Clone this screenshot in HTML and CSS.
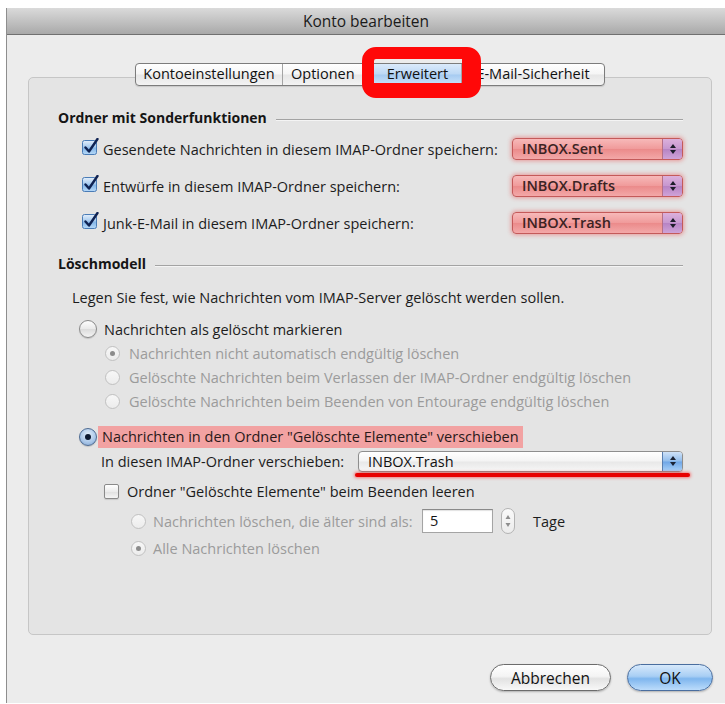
FILE: index.html
```html
<!DOCTYPE html>
<html lang="de">
<head>
<meta charset="utf-8">
<title>Konto bearbeiten</title>
<link rel="stylesheet" href="styles.css">
</head>
<body>
<svg class="defs" width="0" height="0" aria-hidden="true">
  <defs>
    <linearGradient id="check-fill" x1="0" y1="0" x2="0" y2="1">
      <stop offset="0" stop-color="#e4effb"/>
      <stop offset="0.45" stop-color="#a8cbef"/>
      <stop offset="0.55" stop-color="#86b7e8"/>
      <stop offset="1" stop-color="#b7d9f8"/>
    </linearGradient>
  </defs>
</svg>
<div class="screen">
  <div class="window">
    <div class="titlebar">Konto bearbeiten</div>
    <div class="content">
      <div class="tabs">
        <div class="tab-group">
          <div class="tab t1">Kontoeinstellungen</div>
          <div class="tab t2">Optionen</div>
          <div class="tab t3 selected">Erweitert</div>
          <div class="tab t4">E-Mail-Sicherheit</div>
        </div>
      </div>

      <div class="panel">
        <div class="group-head">Ordner mit Sonderfunktionen</div>
        <div class="folder-rows">
          <div class="folder-row">
            <svg class="check" width="18" height="18" viewBox="0 0 18 18"><rect x="0.5" y="2.5" width="14" height="14" rx="2" fill="url(#check-fill)" stroke="#4a7cb6"/><path d="M3.5 9.5 L7 13.5 L15.5 1" fill="none" stroke="#0f2252" stroke-width="2.4" stroke-linecap="round" stroke-linejoin="round"/></svg>
            <span class="label">Gesendete Nachrichten in diesem IMAP-Ordner speichern:</span>
            <div class="popup hl"><span class="popup-value">INBOX.Sent</span><span class="popup-arrows"><svg width="8" height="12" viewBox="0 0 8 12"><path d="M4 1 L7 5 L1 5 Z M1 7 L7 7 L4 11 Z" fill="#1d1d2a"/></svg></span></div>
          </div>
          <div class="folder-row">
            <svg class="check" width="18" height="18" viewBox="0 0 18 18"><rect x="0.5" y="2.5" width="14" height="14" rx="2" fill="url(#check-fill)" stroke="#4a7cb6"/><path d="M3.5 9.5 L7 13.5 L15.5 1" fill="none" stroke="#0f2252" stroke-width="2.4" stroke-linecap="round" stroke-linejoin="round"/></svg>
            <span class="label">Entwürfe in diesem IMAP-Ordner speichern:</span>
            <div class="popup hl"><span class="popup-value">INBOX.Drafts</span><span class="popup-arrows"><svg width="8" height="12" viewBox="0 0 8 12"><path d="M4 1 L7 5 L1 5 Z M1 7 L7 7 L4 11 Z" fill="#1d1d2a"/></svg></span></div>
          </div>
          <div class="folder-row">
            <svg class="check" width="18" height="18" viewBox="0 0 18 18"><rect x="0.5" y="2.5" width="14" height="14" rx="2" fill="url(#check-fill)" stroke="#4a7cb6"/><path d="M3.5 9.5 L7 13.5 L15.5 1" fill="none" stroke="#0f2252" stroke-width="2.4" stroke-linecap="round" stroke-linejoin="round"/></svg>
            <span class="label">Junk-E-Mail in diesem IMAP-Ordner speichern:</span>
            <div class="popup hl"><span class="popup-value">INBOX.Trash</span><span class="popup-arrows"><svg width="8" height="12" viewBox="0 0 8 12"><path d="M4 1 L7 5 L1 5 Z M1 7 L7 7 L4 11 Z" fill="#1d1d2a"/></svg></span></div>
          </div>
        </div>

        <div class="group-head second">Löschmodell</div>
        <div class="desc">Legen Sie fest, wie Nachrichten vom IMAP-Server gelöscht werden sollen.</div>

        <div class="choice">
          <span class="radio"></span>
          <span>Nachrichten als gelöscht markieren</span>
        </div>
        <div class="sub-choices">
          <div class="sub-choice"><span class="radio small on"></span><span>Nachrichten nicht automatisch endgültig löschen</span></div>
          <div class="sub-choice"><span class="radio small"></span><span>Gelöschte Nachrichten beim Verlassen der IMAP-Ordner endgültig löschen</span></div>
          <div class="sub-choice"><span class="radio small"></span><span>Gelöschte Nachrichten beim Beenden von Entourage endgültig löschen</span></div>
        </div>

        <div class="choice move">
          <span class="radio selected"></span>
          <span class="marked">Nachrichten in den Ordner "Gelöschte Elemente" verschieben</span>
        </div>
        <div class="move-row">
          <span class="move-label">In diesen IMAP-Ordner verschieben:</span>
          <div class="popup plain"><span class="popup-value">INBOX.Trash</span><span class="popup-arrows"><svg width="8" height="12" viewBox="0 0 8 12"><path d="M4 1 L7 5 L1 5 Z M1 7 L7 7 L4 11 Z" fill="#1a2233"/></svg></span></div>
        </div>
        <div class="empty-row">
          <span class="box"></span>
          <span>Ordner "Gelöschte Elemente" beim Beenden leeren</span>
        </div>
        <div class="older-row">
          <span class="radio small"></span>
          <span class="older-label">Nachrichten löschen, die älter sind als:</span>
          <span class="field">5</span>
          <span class="stepper"><svg width="8" height="20" viewBox="0 0 8 20"><path d="M4 4 L6.5 8 L1.5 8 Z M1.5 12 L6.5 12 L4 16 Z" fill="#8e8e8e"/></svg></span>
          <span class="days">Tage</span>
        </div>
        <div class="all-row">
          <span class="radio small on"></span>
          <span>Alle Nachrichten löschen</span>
        </div>
      </div>

      <div class="buttons">
        <button class="btn cancel">Abbrechen</button>
        <button class="btn default">OK</button>
      </div>
    </div>
  </div>

  <div class="mark-frame"></div>
  <div class="mark-line"></div>
</div>
</body>
</html>
```

FILE: styles.css
```css
* { box-sizing: border-box; }

html, body {
  margin: 0;
  padding: 0;
  background: #fff;
}

body {
  font-family: "Open Sans", "Noto Sans", sans-serif;
  font-size: 14.5px;
  color: #1c1c1c;
}

.defs { display: block; width: 0; height: 0; }

.screen {
  position: relative;
  width: 725px;
  height: 704px;
  overflow: hidden;
  padding: 8px 0 1px 6px;
}

/* dialog window */
.window {
  height: 695px;
  border-left: 1px solid #8e8e8e;
  background: #ececec;
}

.titlebar {
  height: 27px;
  border-bottom: 1px solid #707070;
  background: linear-gradient(#dadada, #bdbdbd 60%, #a9a9a9);
  text-align: center;
  line-height: 26px;
  font-size: 15.5px;
  color: #1a1a1a;
}

.content {
  padding: 28px 13px 0 21px;
}

/* segmented tab control */
.tabs {
  display: flex;
  justify-content: center;
  position: relative;
  z-index: 1;
}

.tab-group {
  display: flex;
  border: 1px solid #7c7c7c;
  border-radius: 4px;
  overflow: hidden;
  background: linear-gradient(#ffffff, #f5f5f5 48%, #e6e6e6 52%, #f3f3f3);
  box-shadow: 0 1px 1px rgba(0, 0, 0, 0.12);
}

.tab {
  height: 21px;
  line-height: 20px;
  text-align: center;
  font-size: 14.5px;
  color: #111;
  border-left: 1px solid #a4a4a4;
}

.tab:first-child { border-left: 0; }
.t1 { width: 146px; }
.t2 { width: 91px; text-align: left; padding-left: 8px; }
.t3 { width: 88px; }
.t4 { width: 143px; }

.tab.selected {
  background: linear-gradient(#dbeafb, #bcd8f5 48%, #a6cbf1 52%, #cbe3fb);
}

/* grouped panel */
.panel {
  margin-top: -9px;
  height: 558px;
  border: 1px solid #c6c6c6;
  border-radius: 5px;
  background: #e4e4e4;
  padding: 29px 28px 0 29px;
}

.group-head {
  display: flex;
  align-items: center;
  height: 20px;
  font-weight: 700;
  font-size: 14px;
  color: #151515;
}

.group-head::after {
  content: "";
  flex: 1;
  margin: 5px 0 0 9px;
  border-top: 1px solid #a3a3a3;
  border-bottom: 1px solid #f4f4f4;
}

.group-head.second { margin-top: 19px; }

/* special folder rows */
.folder-rows {
  margin-top: 11px;
  display: flex;
  flex-direction: column;
  gap: 15px;
}

.folder-row {
  display: flex;
  align-items: center;
  height: 22px;
  padding-left: 24px;
}

.check { flex: none; margin-top: -4px; }

.label { margin-left: 3px; }

.popup {
  display: flex;
  height: 22px;
  border-radius: 4px;
  overflow: hidden;
}

.folder-row .popup {
  margin-left: auto;
  width: 171px;
}

.popup-value {
  flex: 1;
  padding-left: 9px;
  line-height: 20px;
}

.popup-arrows {
  width: 20px;
  display: flex;
  align-items: center;
  justify-content: center;
}

.popup.hl {
  border: 1px solid #c45a5a;
  background: linear-gradient(#f7b9b9, #f09a9a 50%, #eb8b8b 52%, #f3a8a8);
  box-shadow: 0 0 4px 1px rgba(235, 60, 60, 0.45);
  font-weight: 600;
  color: #3b2323;
}

.popup.hl .popup-arrows {
  border-left: 1px solid #b57088;
  background: linear-gradient(#dcb0dc, #c697cf 50%, #b784c4 52%, #cfa3d8);
}

.popup.plain {
  border: 1px solid #8e8e8e;
  background: linear-gradient(#ffffff, #f4f4f4 48%, #e8e8e8 52%, #f6f6f6);
  box-shadow: 0 1px 1px rgba(0, 0, 0, 0.15);
  color: #111;
}

.popup.plain .popup-arrows {
  border-left: 1px solid #5a7fb0;
  background: linear-gradient(#cfe2f8, #92bdec 48%, #6fa6e6 52%, #a8d0f8);
}

/* deletion model */
.desc {
  margin-top: 15px;
  height: 20px;
  line-height: 20px;
  padding-left: 14px;
}

.radio {
  flex: none;
  display: inline-block;
  width: 18px;
  height: 18px;
  border-radius: 50%;
  border: 1px solid #8a8a8a;
  background: linear-gradient(#fdfdfd, #e9e9e9 50%, #dcdcdc 52%, #f4f4f4);
  box-shadow: 0 1px 1px rgba(0, 0, 0, 0.15);
  position: relative;
}

.radio.small {
  width: 15px;
  height: 15px;
  border-color: #c1c1c1;
  background: linear-gradient(#f7f7f7, #ececec);
  box-shadow: none;
}

.radio.small.on::after {
  content: "";
  position: absolute;
  left: 4px;
  top: 4px;
  width: 5px;
  height: 5px;
  border-radius: 50%;
  background: #8c8c8c;
}

.radio.selected {
  border-color: #4d6b93;
  background: radial-gradient(circle at 50% 35%, #e3eefa, #a9c6e8 60%, #7d9fcc);
}

.radio.selected::after {
  content: "";
  position: absolute;
  left: 5px;
  top: 5px;
  width: 6px;
  height: 6px;
  border-radius: 50%;
  background: #0d1a31;
}

.choice {
  display: flex;
  align-items: center;
  gap: 7px;
  height: 20px;
  margin-top: 11px;
  padding-left: 21px;
}

.sub-choices {
  margin-top: 2px;
  color: #9b9b9b;
}

.sub-choice {
  display: flex;
  align-items: center;
  gap: 9px;
  height: 24px;
  padding-left: 47px;
}

.choice.move {
  height: 22px;
  margin-top: 13px;
  gap: 1px;
}

.marked {
  background: #f2a2a2;
  line-height: 22px;
  padding: 0 4px 0 4px;
  color: #2a1a1a;
}

.move-row {
  display: flex;
  align-items: center;
  height: 22px;
  margin-top: 2px;
  padding-left: 43px;
}

.move-label { width: 257px; flex: none; }

.move-row .popup { flex: 1; height: 21px; }
.move-row .popup-value { line-height: 19px; }

.empty-row {
  display: flex;
  align-items: center;
  gap: 8px;
  height: 20px;
  margin-top: 9px;
  padding-left: 46px;
}

.box {
  flex: none;
  width: 15px;
  height: 15px;
  border: 1px solid #8a8a8a;
  border-radius: 2px;
  background: linear-gradient(#ffffff, #ececec 50%, #e0e0e0 52%, #f5f5f5);
  box-shadow: 0 1px 1px rgba(0, 0, 0, 0.12);
}

.older-row {
  display: flex;
  align-items: center;
  height: 26px;
  margin-top: 7px;
  padding-left: 73px;
  color: #9b9b9b;
}

.older-label { margin-left: 7px; width: 269px; flex: none; }

.field {
  width: 71px;
  height: 24px;
  border: 1px solid #a4a4a4;
  border-top-color: #8a8a8a;
  background: #fff;
  box-shadow: inset 0 1px 1px rgba(0, 0, 0, 0.12);
  color: #111;
  line-height: 22px;
  padding-left: 7px;
}

.stepper {
  margin-left: 8px;
  width: 14px;
  height: 26px;
  border: 1px solid #b3b3b3;
  border-radius: 7px;
  background: linear-gradient(#fafafa, #ececec);
  display: flex;
  align-items: center;
  justify-content: center;
}

.days {
  margin-left: 18px;
  color: #1c1c1c;
}

.all-row {
  display: flex;
  align-items: center;
  gap: 7px;
  height: 20px;
  margin-top: 4px;
  padding-left: 73px;
  color: #9b9b9b;
}

/* dialog buttons */
.buttons {
  display: flex;
  justify-content: flex-end;
  gap: 16px;
  margin-top: 29px;
  margin-right: -1px;
}

.btn {
  font: inherit;
  font-size: 15.5px;
  height: 27px;
  padding: 0;
  border-radius: 14px;
  border: 1px solid #6c6c6c;
  color: #111;
  background: linear-gradient(#ffffff, #f4f4f4 45%, #e2e2e2 55%, #f8f8f8);
  box-shadow: 0 1px 2px rgba(0, 0, 0, 0.25);
}

.btn.cancel { width: 121px; }

.btn.default {
  width: 86px;
  border-color: #4a6e9f;
  background: linear-gradient(#d7e9fb, #a8cef4 45%, #7fb6ee 55%, #bcdcfb);
}

/* red annotation marks drawn over the dialog */
.mark-frame {
  position: absolute;
  left: 362px;
  top: 47px;
  width: 119px;
  height: 51px;
  border-style: solid;
  border-color: #ff0808;
  border-width: 12px 19px 15px 12px;
  border-radius: 14px;
  filter: blur(0.7px);
  z-index: 2;
}

.mark-line {
  position: absolute;
  left: 355px;
  top: 473px;
  width: 335px;
  height: 4px;
  border-radius: 2px;
  background: #e80000;
  box-shadow: 0 0 3px 1px rgba(255, 40, 40, 0.55);
  z-index: 2;
}
```
